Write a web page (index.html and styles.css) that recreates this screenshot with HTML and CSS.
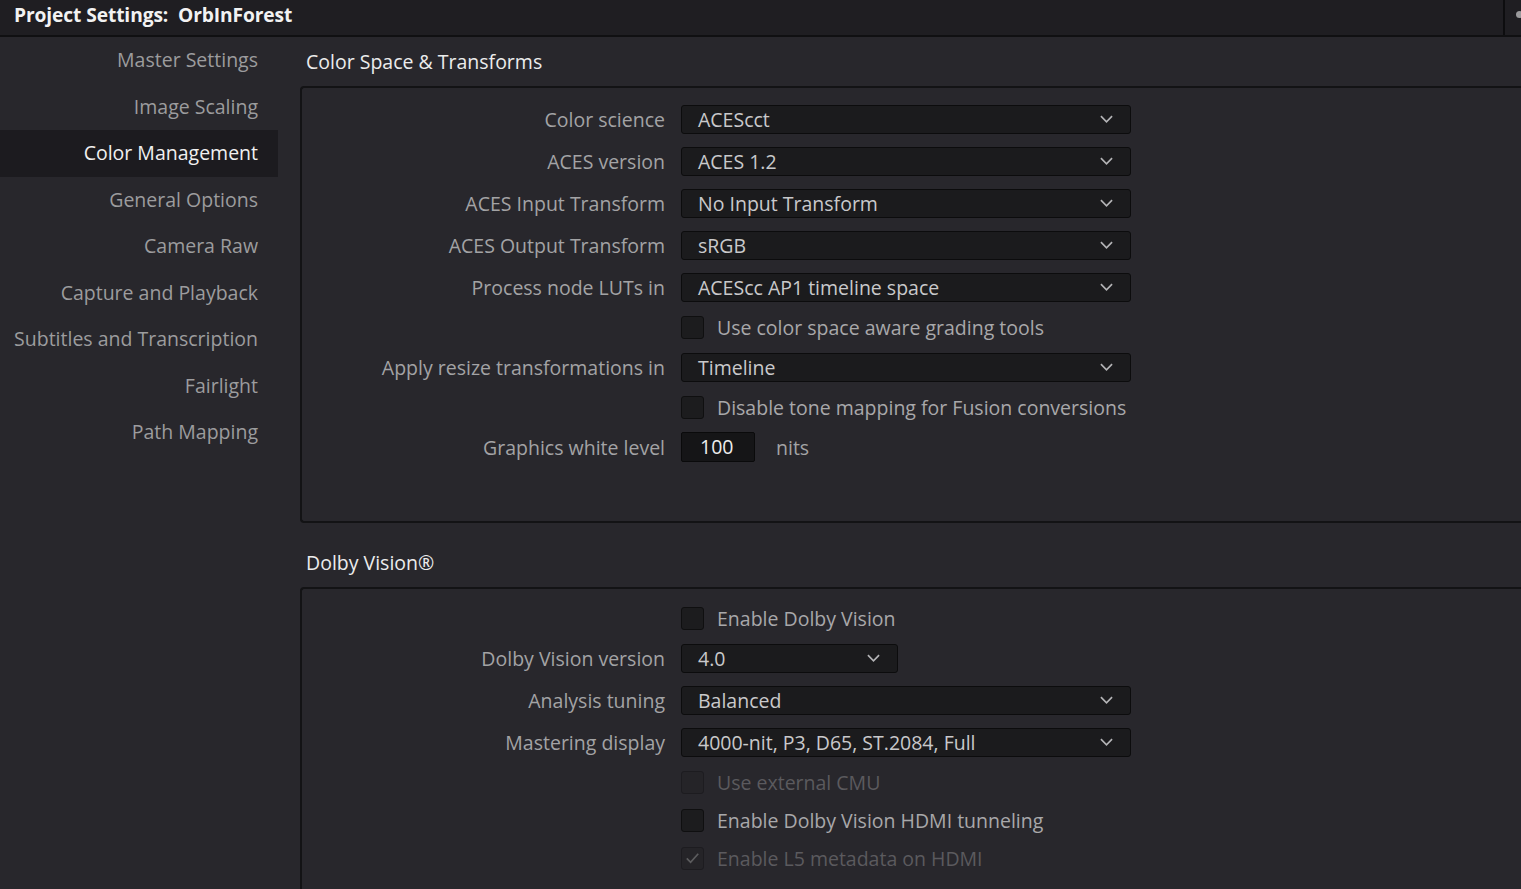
FILE: index.html
```html
<!DOCTYPE html>
<html>
<head>
<meta charset="utf-8">
<link rel="stylesheet" href="styles.css">
</head>
<body>
<div class="app">
  <header class="titlebar">
    <div class="title">Project Settings:&nbsp; OrbInForest</div>
    <div class="titlebar-right"><span class="dot"></span></div>
  </header>
  <div class="body">
    <nav class="sidebar">
      <div class="nav-item">Master Settings</div>
      <div class="nav-item">Image Scaling</div>
      <div class="nav-item active">Color Management</div>
      <div class="nav-item">General Options</div>
      <div class="nav-item">Camera Raw</div>
      <div class="nav-item">Capture and Playback</div>
      <div class="nav-item">Subtitles and Transcription</div>
      <div class="nav-item">Fairlight</div>
      <div class="nav-item">Path Mapping</div>
    </nav>
    <main class="main">
      <h2 class="section-title">Color Space &amp; Transforms</h2>
      <section class="panel panel-1">
        <div class="row drow"><label class="lbl">Color science</label><div class="select"><span>ACEScct</span><svg class="chev" viewBox="0 0 14 8"><path d="M1 1l6 6 6-6"/></svg></div></div>
        <div class="row drow"><label class="lbl">ACES version</label><div class="select"><span>ACES 1.2</span><svg class="chev" viewBox="0 0 14 8"><path d="M1 1l6 6 6-6"/></svg></div></div>
        <div class="row drow"><label class="lbl">ACES Input Transform</label><div class="select"><span>No Input Transform</span><svg class="chev" viewBox="0 0 14 8"><path d="M1 1l6 6 6-6"/></svg></div></div>
        <div class="row drow"><label class="lbl">ACES Output Transform</label><div class="select"><span>sRGB</span><svg class="chev" viewBox="0 0 14 8"><path d="M1 1l6 6 6-6"/></svg></div></div>
        <div class="row drow"><label class="lbl">Process node LUTs in</label><div class="select"><span>ACEScc AP1 timeline space</span><svg class="chev" viewBox="0 0 14 8"><path d="M1 1l6 6 6-6"/></svg></div></div>
        <div class="row crow"><span class="lbl"></span><div class="check"><span class="box"></span><span class="ctext">Use color space aware grading tools</span></div></div>
        <div class="row drow"><label class="lbl">Apply resize transformations in</label><div class="select"><span>Timeline</span><svg class="chev" viewBox="0 0 14 8"><path d="M1 1l6 6 6-6"/></svg></div></div>
        <div class="row crow"><span class="lbl"></span><div class="check"><span class="box"></span><span class="ctext">Disable tone mapping for Fusion conversions</span></div></div>
        <div class="row drow"><label class="lbl">Graphics white level</label><div class="inline"><div class="num">100</div><span class="unit">nits</span></div></div>
      </section>
      <h2 class="section-title second">Dolby Vision®</h2>
      <section class="panel panel-2">
        <div class="row crow"><span class="lbl"></span><div class="check"><span class="box"></span><span class="ctext">Enable Dolby Vision</span></div></div>
        <div class="row drow"><label class="lbl">Dolby Vision version</label><div class="select small"><span>4.0</span><svg class="chev" viewBox="0 0 14 8"><path d="M1 1l6 6 6-6"/></svg></div></div>
        <div class="row drow"><label class="lbl">Analysis tuning</label><div class="select"><span>Balanced</span><svg class="chev" viewBox="0 0 14 8"><path d="M1 1l6 6 6-6"/></svg></div></div>
        <div class="row drow"><label class="lbl">Mastering display</label><div class="select"><span>4000-nit, P3, D65, ST.2084, Full</span><svg class="chev" viewBox="0 0 14 8"><path d="M1 1l6 6 6-6"/></svg></div></div>
        <div class="row crow disabled"><span class="lbl"></span><div class="check"><span class="box"></span><span class="ctext">Use external CMU</span></div></div>
        <div class="row crow"><span class="lbl"></span><div class="check"><span class="box"></span><span class="ctext">Enable Dolby Vision HDMI tunneling</span></div></div>
        <div class="row crow disabled"><span class="lbl"></span><div class="check"><span class="box checked"><svg viewBox="0 0 22 22"><path d="M5 11.5l4 4 8-9"/></svg></span><span class="ctext">Enable L5 metadata on HDMI</span></div></div>
      </section>
    </main>
  </div>
</div>
</body>
</html>
```
FILE: styles.css
```css
* { box-sizing: border-box; }
html, body {
  margin: 0;
  padding: 0;
  width: 1521px;
  height: 889px;
  overflow: hidden;
  background: #28272c;
  font-family: "Open Sans", "Noto Sans", sans-serif;
}
.app {
  display: flex;
  flex-direction: column;
  height: 889px;
}
.titlebar {
  height: 37px;
  flex: none;
  background: #1f1e22;
  border-bottom: 2px solid #101012;
  display: flex;
  align-items: stretch;
}
.title {
  flex: 1;
  padding-left: 14px;
  font-weight: 700;
  font-size: 19.2px;
  color: #f2f2f2;
  line-height: 30px;
  letter-spacing: -0.1px;
}
.titlebar-right {
  width: 18px;
  border-left: 2px solid #0d0d0f;
  position: relative;
}
.dot {
  position: absolute;
  left: 11px;
  top: 11px;
  width: 7px;
  height: 7px;
  border-radius: 50%;
  background: #9a9a9c;
}
.body {
  flex: 1;
  display: flex;
  min-height: 0;
}
.sidebar {
  width: 278px;
  flex: none;
}
.nav-item {
  height: 46.5px;
  line-height: 45px;
  text-align: right;
  padding-right: 20px;
  font-size: 19.5px;
  color: #9c9c9e;
  white-space: nowrap;
}
.nav-item.active {
  background: #1c1b1f;
  color: #f0f0f0;
}
.main {
  flex: 1;
  padding-left: 22px;
  min-width: 0;
}
.section-title {
  margin: 0;
  height: 49px;
  padding-left: 6px;
  font-weight: 400;
  font-size: 19.5px;
  line-height: 50px;
  color: #ececec;
}
.section-title.second {
  height: 64px;
  line-height: 80px;
}
.panel {
  border: 2px solid #131315;
  border-right: none;
  border-radius: 4px 0 0 4px;
  padding-top: 10px;
  display: grid;
  grid-template-columns: 363px 1fr;
  column-gap: 16px;
  align-content: start;
}
.panel-1 { height: 437px; }
.panel-2 { height: 320px; border-bottom: none; border-radius: 4px 0 0 0; }
.row { display: contents; }
.lbl {
  display: flex;
  align-items: center;
  justify-content: flex-end;
  font-size: 19.5px;
  color: #a3a3a5;
  white-space: nowrap;
}
.drow .lbl, .drow > .select, .drow > .inline { height: 42px; }
.crow .lbl, .crow > .check { height: 38px; }
.select {
  align-self: center;
  width: 450px;
  height: 29px !important;
  background: #1b1b1d;
  border: 1px solid #0c0c0d;
  border-radius: 3px;
  display: flex;
  align-items: center;
  justify-content: space-between;
  padding: 0 17px 0 16px;
  font-size: 19.5px;
  color: #c9c9cb;
  white-space: nowrap;
}
.select.small { width: 217px; }
.chev {
  width: 13px;
  height: 8px;
  fill: none;
  stroke: #b4b4b6;
  stroke-width: 1.8;
}
.check {
  display: flex;
  align-items: center;
  gap: 13px;
}
.box {
  width: 23px;
  height: 23px;
  flex: none;
  background: #1c1c1e;
  border: 1px solid #0f0f10;
  border-radius: 3px;
  display: flex;
  align-items: center;
  justify-content: center;
}
.box svg {
  width: 22px;
  height: 22px;
  fill: none;
  stroke: #5c5c5e;
  stroke-width: 1.8;
}
.ctext {
  font-size: 19.5px;
  color: #a8a8aa;
  white-space: nowrap;
}
.disabled .box {
  background: #252428;
  border-color: #1d1c20;
}
.disabled .ctext { color: #5b5a5e; }
.inline {
  display: flex;
  align-items: center;
  gap: 21px;
}
.num {
  width: 74px;
  height: 30px;
  background: #151517;
  border: 1px solid #0a0a0b;
  border-radius: 2px;
  font-size: 19.5px;
  color: #ededed;
  line-height: 28px;
  padding-left: 18px;
}
.unit {
  font-size: 19.5px;
  color: #a3a3a5;
}
```
